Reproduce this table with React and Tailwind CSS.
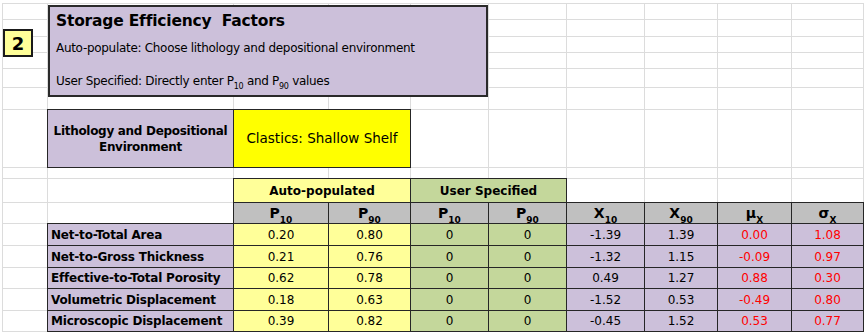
import React from 'react';

// Excel-style sheet: light gridlines live on <col> and <tr>, cell borders win over them
const COLS = ['w-[45px]', 'w-[186px]', 'w-[95px]', 'w-[82px]', 'w-[78px]', 'w-[78px]', 'w-[78px]', 'w-[73px]', 'w-[74px]', 'w-[72px]'];

const ROWS = [
    { name: 'Net-to-Total Area', p10: '0.20', p90: '0.80', x10: '-1.39', x90: '1.39', mu: '0.00', sigma: '1.08', h: 'h-[22px]' },
    { name: 'Net-to-Gross Thickness', p10: '0.21', p90: '0.76', x10: '-1.32', x90: '1.15', mu: '-0.09', sigma: '0.97', h: 'h-[22px]' },
    { name: 'Effective-to-Total Porosity', p10: '0.62', p90: '0.78', x10: '0.49', x90: '1.27', mu: '0.88', sigma: '0.30', h: 'h-[21px]' },
    { name: 'Volumetric Displacement', p10: '0.18', p90: '0.63', x10: '-1.52', x90: '0.53', mu: '-0.49', sigma: '0.80', h: 'h-[22px]' },
    { name: 'Microscopic Displacement', p10: '0.39', p90: '0.82', x10: '-0.45', x90: '1.52', mu: '0.53', sigma: '0.77', h: 'h-[21px]' },
];

const TOP_ROWS = ['h-[16px]', 'h-[17px]', 'h-[16px]', 'h-[16px]', 'h-[19px]', 'h-[22px]'];

const Empty = ({ n }) => Array.from({ length: n }, (_, i) => <td key={i} />);

const Sub = ({ base, sub }) => (
    <span className="font-bold text-[14px]">
        {base}
        <sub className="text-[9px] align-[-3px]">{sub}</sub>
    </span>
);

const GRID = 'border-y border-[#dcdcdc]';
const CELL = 'border border-[#262626] text-center text-[12px]';

export default function App() {
    return (
        <div
            className="relative w-[865px] h-[335px] bg-white overflow-hidden text-black"
            style={{ fontFamily: '"DejaVu Sans", Verdana, sans-serif' }}
        >
            <table className="ml-[2px] mt-[3px] table-fixed border-collapse w-[861px]">
                <colgroup>
                    {COLS.map((c, i) => <col key={i} className={`${c} border-x border-[#dcdcdc]`} />)}
                </colgroup>
                <tbody>
                    {TOP_ROWS.map((h, i) => (
                        <tr key={i} className={`${GRID} ${h}`}><Empty n={10} /></tr>
                    ))}

                    {/* lithology picker */}
                    <tr className={`${GRID} h-[58px]`}>
                        <td />
                        <td className="border border-[#262626] bg-[#ccc0da] text-center font-bold text-[12px] leading-[16px] tracking-[-0.3px]">
                            Lithology and Depositional<br />Environment
                        </td>
                        <td colSpan={2} className="border border-[#262626] bg-[#ffff00] text-center text-[13.5px]">
                            Clastics: Shallow Shelf
                        </td>
                        <Empty n={6} />
                    </tr>
                    <tr className={`${GRID} h-[11px]`}><Empty n={10} /></tr>

                    {/* group headers */}
                    <tr className={`${GRID} h-[24px]`}>
                        <Empty n={2} />
                        <td colSpan={2} className="border border-[#262626] bg-[#ffff99] text-center font-bold text-[12px]">
                            Auto-populated
                        </td>
                        <td colSpan={2} className="border border-[#262626] bg-[#c4d79b] text-center font-bold text-[12px]">
                            User Specified
                        </td>
                        <Empty n={4} />
                    </tr>
                    <tr className={`${GRID} h-[21px]`}>
                        <Empty n={2} />
                        {[['P', '10'], ['P', '90'], ['P', '10'], ['P', '90'], ['X', '10'], ['X', '90'], ['μ', 'X'], ['σ', 'X']].map(([b, s], i) => (
                            <td key={i} className={`${CELL} bg-[#c0c0c0] leading-none`}>
                                <Sub base={b} sub={s} />
                            </td>
                        ))}
                    </tr>

                    {ROWS.map((r) => (
                        <tr key={r.name} className={`${GRID} ${r.h}`}>
                            <td />
                            <td className="border border-[#262626] bg-[#ccc0da] pl-[3px] font-bold text-[12px] tracking-[-0.2px] whitespace-nowrap">
                                {r.name}
                            </td>
                            <td className={`${CELL} bg-[#ffff99]`}>{r.p10}</td>
                            <td className={`${CELL} bg-[#ffff99]`}>{r.p90}</td>
                            <td className={`${CELL} bg-[#c4d79b]`}>0</td>
                            <td className={`${CELL} bg-[#c4d79b]`}>0</td>
                            <td className={`${CELL} bg-[#ccc0da]`}>{r.x10}</td>
                            <td className={`${CELL} bg-[#ccc0da]`}>{r.x90}</td>
                            <td className={`${CELL} bg-[#ccc0da] text-[#ff0000]`}>{r.mu}</td>
                            <td className={`${CELL} bg-[#ccc0da] text-[#ff0000]`}>{r.sigma}</td>
                        </tr>
                    ))}
                </tbody>
            </table>

            {/* step badge, a shape floating over the sheet */}
            <div className="absolute left-[3px] top-[29px] w-[30px] h-[28px] border-2 border-[#1a1a1a] bg-[#ffff99] flex items-center justify-center font-bold text-[18px]">
                2
            </div>

            {/* title text box, also floating */}
            <div className="absolute left-[48px] top-[5px] w-[440px] h-[92px] border-2 border-[#2a2a2a] bg-[#ccc0da] pl-[6px] flex flex-col">
                <div className="mt-[3px] font-bold text-[15.5px] tracking-[-0.2px] whitespace-pre">Storage Efficiency  Factors</div>
                <div className="mt-[6px] text-[12px] tracking-[-0.3px]">Auto-populate: Choose lithology and depositional environment</div>
                <div className="mt-[15px] text-[12px] tracking-[-0.3px]">
                    User Specified: Directly enter P<sub className="text-[8px] align-[-2px]">10</sub> and P<sub className="text-[8px] align-[-2px]">90</sub> values
                </div>
            </div>
        </div>
    );
}
